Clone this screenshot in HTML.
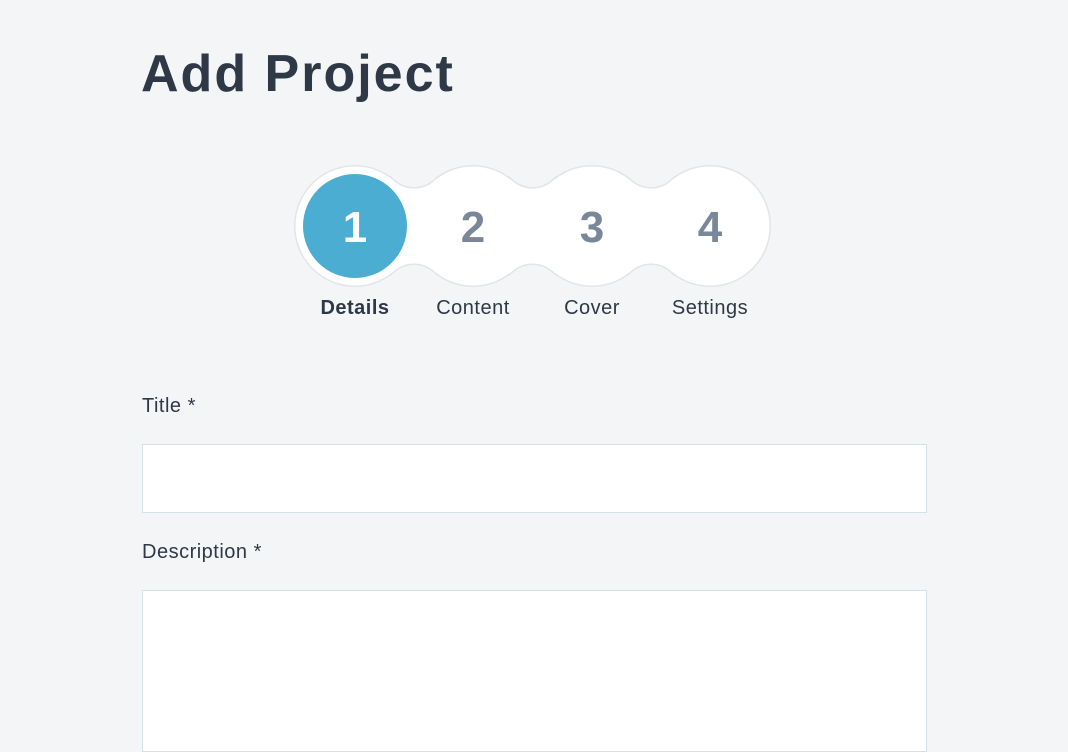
<!DOCTYPE html>
<html><head><style>
body{margin:0;width:1068px;height:731px;background:#f4f5f7;font-family:"Liberation Sans",sans-serif;color:#2e3846;overflow:hidden;position:relative}
h1{position:absolute;left:141px;top:44px;margin:0;font-size:52px;font-weight:bold;letter-spacing:2px}
.lbl{position:absolute;top:297px;font-size:20px;width:120px;text-align:center;letter-spacing:0.5px}
.f{position:absolute;left:142px;font-size:20px;letter-spacing:0.5px}
.in{position:absolute;left:142px;width:783px;background:#fff;border:1px solid #d4e2e6}
</style></head><body>
<h1>Add Project</h1>
<svg style="position:absolute;left:0;top:0" width="1068" height="340">
<defs>
<g id="sh">
<circle cx="355" cy="226" r="58"/><circle cx="473" cy="226" r="58"/><circle cx="592" cy="226" r="58"/><circle cx="710" cy="226" r="58"/>
<path d="M393 182.2 A32 32 0 0 0 435 182.2 L435 269.8 A32 32 0 0 0 393 269.8 Z"/>
<path d="M511.5 182.2 A32 32 0 0 0 553.5 182.2 L553.5 269.8 A32 32 0 0 0 511.5 269.8 Z"/>
<path d="M630 182.2 A32 32 0 0 0 672 182.2 L672 269.8 A32 32 0 0 0 630 269.8 Z"/>
</g>
</defs>
<use href="#sh" fill="#e2e5e8" stroke="#e2e5e8" stroke-width="6"/>
<use href="#sh" fill="#fff" stroke="#fff" stroke-width="3"/>
<circle cx="355" cy="226" r="52" fill="#4badd1"/>
<g font-family="Liberation Sans" font-weight="bold" font-size="44" text-anchor="middle">
<text x="355" y="242" fill="#fff">1</text>
<text x="473" y="242" fill="#7a8799">2</text>
<text x="592" y="242" fill="#7a8799">3</text>
<text x="710" y="242" fill="#7a8799">4</text>
</g>
</svg>
<div class="lbl" style="left:295px;font-weight:bold">Details</div>
<div class="lbl" style="left:413px">Content</div>
<div class="lbl" style="left:532px">Cover</div>
<div class="lbl" style="left:650px">Settings</div>
<div class="f" style="top:395px">Title *</div>
<div class="in" style="top:444px;height:67px"></div>
<div class="f" style="top:541px">Description *</div>
<div class="in" style="top:590px;height:160px"></div>
</body></html>
